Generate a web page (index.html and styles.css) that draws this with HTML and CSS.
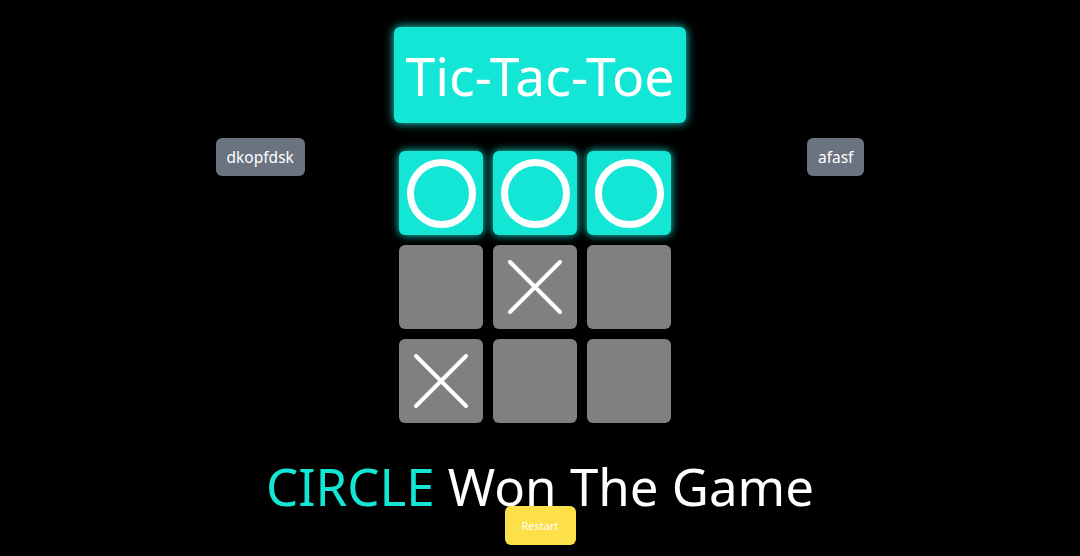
FILE: index.html
```html
<!DOCTYPE html>
<html>
<head>
<meta charset="utf-8">
<link rel="stylesheet" href="styles.css">
</head>
<body>
<div class="app">
  <h1 class="title">Tic-Tac-Toe</h1>
  <div class="row">
    <div class="player">dkopfdsk</div>
    <div class="board-wrap">
      <div class="board">
        <div class="cell win"><span class="circle"></span></div>
        <div class="cell win"><span class="circle"></span></div>
        <div class="cell win"><span class="circle"></span></div>
        <div class="cell"></div>
        <div class="cell"><svg class="cross" viewBox="0 0 54 54"><path d="M2 2L52 52M52 2L2 52"/></svg></div>
        <div class="cell"></div>
        <div class="cell"><svg class="cross" viewBox="0 0 54 54"><path d="M2 2L52 52M52 2L2 52"/></svg></div>
        <div class="cell"></div>
        <div class="cell"></div>
      </div>
    </div>
    <div class="player">afasf</div>
  </div>
  <h2 class="result"><span class="winner">CIRCLE</span> Won The Game</h2>
  <button class="restart">Restart</button>
</div>
</body>
</html>
```
FILE: styles.css
```css
html, body {
  margin: 0;
  padding: 0;
  background: #000;
  font-family: "Noto Sans", "Open Sans", sans-serif;
  color: #fff;
}
.app {
  display: flex;
  flex-direction: column;
  align-items: center;
  padding-top: 27px;
}
.title {
  margin: 0;
  width: 292px;
  height: 96px;
  box-sizing: border-box;
  display: flex;
  align-items: center;
  justify-content: center;
  background: #14e6d6;
  border-radius: 6px;
  box-shadow: 0 0 10px #14e6d6;
  font-size: 53.5px;
  font-weight: 400;
  color: #fff;
}
.row {
  display: flex;
  justify-content: space-evenly;
  align-items: flex-start;
  width: 838px;
  margin-top: 15px;
}
.player {
  height: 38px;
  padding: 0 11px;
  box-sizing: border-box;
  display: flex;
  align-items: center;
  background: #6b7280;
  border-radius: 6px;
  font-size: 15.5px;
}
.board-wrap {
  width: 313px;
  padding-top: 13px;
}
.board {
  display: grid;
  grid-template-columns: repeat(3, 84px);
  grid-auto-rows: 84px;
  gap: 10px;
}
.cell {
  background: #808080;
  border-radius: 6px;
  display: flex;
  align-items: center;
  justify-content: center;
}
.cell.win {
  background: #14e6d6;
  box-shadow: 0 0 8px #14e6d6;
}
.circle {
  width: 69px;
  height: 69px;
  box-sizing: border-box;
  border: 7px solid #fff;
  border-radius: 50%;
}
.cross {
  width: 54px;
  height: 54px;
}
.cross path {
  stroke: #fff;
  stroke-width: 4;
  stroke-linecap: round;
  fill: none;
}
.result {
  margin: 43px 0 0;
  font-size: 51px;
  font-weight: 400;
  line-height: 40px;
}
.winner {
  color: #14e6d6;
}
.restart {
  width: 71px;
  height: 39px;
  border: none;
  border-radius: 6px;
  background: #fde047;
  color: #fff;
  font-family: "Noto Sans", sans-serif;
  font-size: 11px;
  padding: 0;
}
```
